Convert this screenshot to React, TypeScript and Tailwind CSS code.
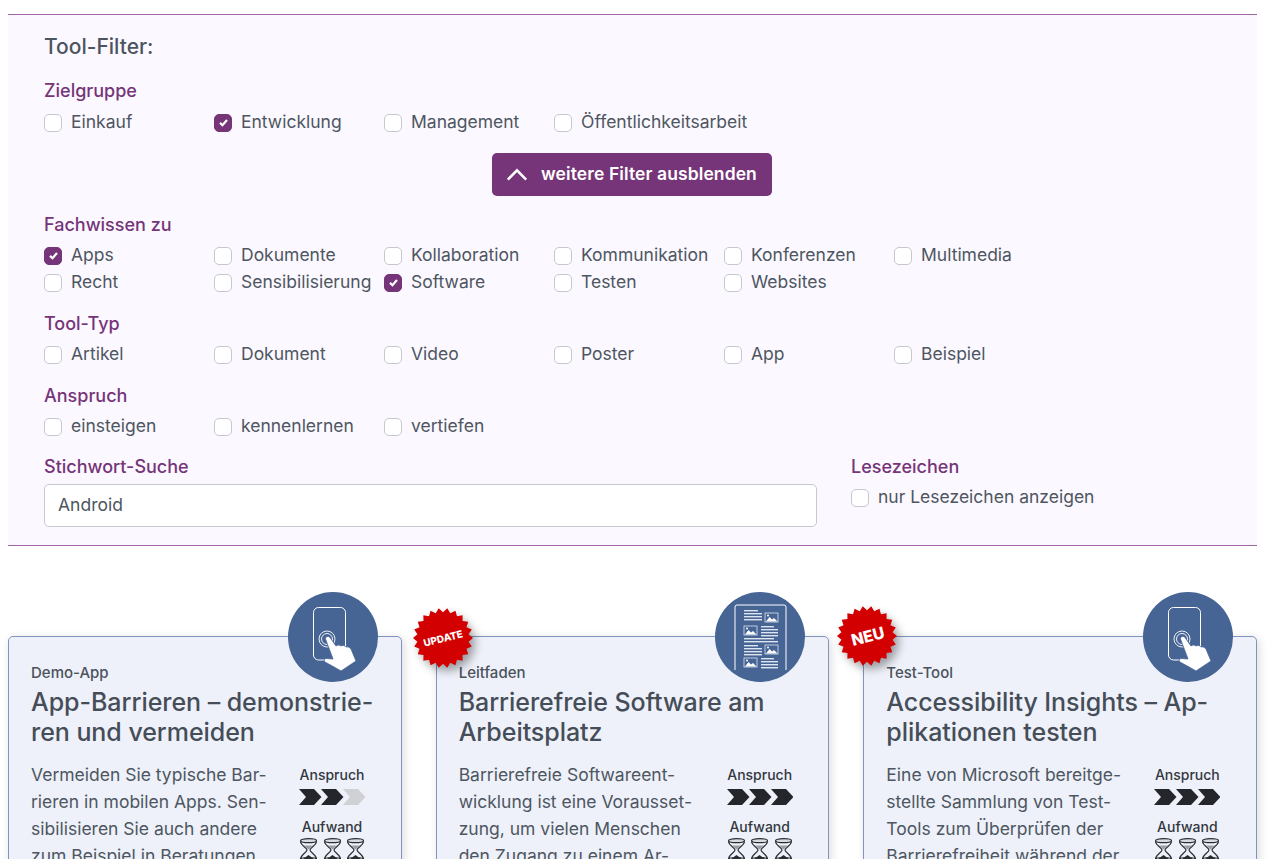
import React from "react";

const font = { fontFamily: '"Inter", "Liberation Sans", sans-serif' };

function Check({ label, checked = false, wide = false }: { label: string; checked?: boolean; wide?: boolean }) {
  return (
    <label className={`flex items-center gap-[9px] h-[27px] ${wide ? "" : "w-[170px]"}`}>
      <span
        className={`w-[18px] h-[18px] shrink-0 rounded-[5px] border flex items-center justify-center ${
          checked ? "bg-[#753578] border-[#753578]" : "bg-white border-[#c5c9cf]"
        }`}
      >
        {checked && (
          <svg viewBox="0 0 12 12" className="w-[11px] h-[11px]">
            <path d="M2.200 6.400 4.900 9 9.800 3.300" fill="none" stroke="#fff" strokeWidth="2.400" />
          </svg>
        )}
      </span>
      <span className="text-[17.5px] tracking-[0px] text-[#4d5661] whitespace-nowrap">{label}</span>
    </label>
  );
}

function Group({ title, children }: { title: string; children: React.ReactNode }) {
  return (
    <div>
      <div className="text-[18px] leading-[24px] font-medium text-[#753578] mb-[5px]">{title}</div>
      {children}
    </div>
  );
}

function Row({ items, checked = [] }: { items: string[]; checked?: string[] }) {
  return (
    <div className="flex">
      {items.map((i) => (
        <Check key={i} label={i} checked={checked.includes(i)} />
      ))}
    </div>
  );
}

function Burst({ text, size }: { text: string; size: string }) {
  const pts: string[] = [];
  const n = 22;
  for (let k = 0; k < n * 2; k++) {
    const r = k % 2 === 0 ? 50 : 43;
    const a = (Math.PI * k) / n;
    pts.push(`${50 + r * Math.cos(a)},${50 + r * Math.sin(a)}`);
  }
  return (
    <div className="relative w-[60px] h-[60px] flex items-center justify-center">
      <svg viewBox="0 0 100 100" className="absolute inset-0 w-full h-full drop-shadow-[4px_5px_4px_rgba(0,0,0,0.35)]">
        <polygon points={pts.join(" ")} fill="#d20000" />
      </svg>
      <span className={`relative text-white font-extrabold -rotate-[14deg] ${size}`}>{text}</span>
    </div>
  );
}

function PhoneIcon() {
  return (
    <svg viewBox="0 0 90 90" className="w-full h-full">
      <rect x="25.500" y="15.500" width="32" height="52.500" rx="5" fill="none" stroke="#fff" strokeWidth="1" />
      <circle cx="39" cy="47" r="8" fill="none" stroke="#fff" strokeWidth="0.9" />
      <circle cx="39" cy="47" r="5.500" fill="none" stroke="#fff" strokeWidth="0.9" />
      <path
        d="M37.500 47C37 44.500 40.500 43.500 42 45.500L48 54C50 52.500 52 53 53 54C55 53 57 53.500 58 55C60 54.500 62 55.500 63 57L68 69L53 79L47 75.500L37 70C35.500 69 36 66.500 38 66.500L45 67Z"
        fill="#fff"
        stroke="#466494"
        strokeWidth="0.8"
      />
    </svg>
  );
}

function DocIcon() {
  const lines = (x: number, y: number, w: number, n: number) =>
    Array.from({ length: n }, (_, i) => <rect key={`${x}-${y}-${i}`} x={x} y={y + i * 3} width={i === 0 && w > 16 ? w - 4 : w} height="1.400" fill="#dfe5f0" />);
  const pic = (x: number, y: number) => (
    <g key={`${x}-${y}`}>
      <rect x={x} y={y} width="13" height="9" fill="none" stroke="#dfe5f0" strokeWidth="0.8" />
      <path d={`M${x + 1} ${y + 8.5}l3.500-4.500 2.500 2.500 2-1.500 3.500 3.500z`} fill="#fff" />
      <circle cx={x + 3} cy={y + 2.5} r="1" fill="#fff" />
    </g>
  );
  return (
    <svg viewBox="0 0 90 90" className="w-full h-full">
      <path d="M20 78V15a2 2 0 0 1 2-2h47a2 2 0 0 1 2 2v63" fill="none" stroke="#fff" strokeWidth="1" />
      {lines(29, 18, 18, 4)}
      {pic(50, 21)}
      {pic(29, 34)}
      {lines(46, 34, 17, 4)}
      {lines(29, 46, 34, 2)}
      {lines(29, 53, 18, 4)}
      {pic(50, 53)}
      {pic(29, 66)}
      {lines(46, 66, 17, 4)}
    </svg>
  );
}

function Chevrons({ filled }: { filled: number }) {
  return (
    <svg viewBox="0 0 66 16" className="w-[66px] h-[16px]">
      {[0, 1, 2].map((i) => (
        <polygon
          key={i}
          points={`${i * 22},0 ${i * 22 + 15},0 ${i * 22 + 22.5},8 ${i * 22 + 15},16 ${i * 22},16 ${i * 22 + 7},8`}
          fill={i < filled ? "#24262b" : "#cfd1d4"}
        />
      ))}
    </svg>
  );
}

function Hourglass() {
  return (
    <svg viewBox="0 0 19 24" className="w-[19px] h-[24px] shrink-0">
      <ellipse cx="9.500" cy="2.700" rx="8" ry="2" fill="#d8dbe0" stroke="#2a2c30" strokeWidth="1.200" />
      <ellipse cx="9.500" cy="21.500" rx="8" ry="2" fill="#d8dbe0" stroke="#2a2c30" strokeWidth="1.200" />
      <path d="M1.500 3.500C2 8 8 9.500 8 12S2 16 1.500 21M17.500 3.500C17 8 11 9.500 11 12S17 16 17.500 21" fill="none" stroke="#2a2c30" strokeWidth="1.200" />
      <path d="M5 7.500h9L9.500 11.500z" fill="#9a9da3" />
      <path d="M4 21 9.500 17 15 21z" fill="#2a2c30" />
    </svg>
  );
}

function Card({
  kind,
  title,
  text,
  filled,
  icon,
  badge,
}: {
  kind: string;
  title: React.ReactNode;
  text: React.ReactNode;
  filled: number;
  icon: React.ReactNode;
  badge?: React.ReactNode;
}) {
  return (
    <div className="relative h-[260px] bg-[#eef1f9] border-[1.5px] border-[#7f95bf] rounded-t-[5px] pl-[22px] pt-[26px] shadow-[2px_2px_10px_rgba(0,0,0,0.14)]">
      <div className="absolute -top-[45px] right-[23px] w-[90px] h-[90px] rounded-full bg-[#466494]">{icon}</div>
      {badge}
      <div className="text-[15px] leading-[20px] font-medium text-[#4b525c]">{kind}</div>
      <div className="text-[25px] leading-[30px] font-medium tracking-[-0.05px] text-[#454d58] mt-[4px] whitespace-nowrap">{title}</div>
      <div className="flex mt-[14px]">
        <div className="w-[250px] text-[17.5px] leading-[27px] text-[#4d5661] whitespace-nowrap">{text}</div>
        <div className="w-[90px] flex flex-col items-center ml-[6px] pt-[4px]">
          <div className="text-[14px] leading-[20px] font-medium text-[#33383f]">Anspruch</div>
          <div className="mt-[4px] h-[16px]">
            <Chevrons filled={filled} />
          </div>
          <div className="text-[14px] leading-[20px] font-medium text-[#33383f] mt-[12px]">Aufwand</div>
          <div className="flex gap-[4.500px] mt-[1px]">
            <Hourglass />
            <Hourglass />
            <Hourglass />
          </div>
        </div>
      </div>
    </div>
  );
}

export default function App() {
  return (
    <div className="h-[864px] bg-white">
      <div className="h-[859px] overflow-hidden px-2 pt-[14px]" style={font}>
        <div className="w-[1249px] h-[532px] bg-[#fcf8ff] border-y border-[#a065a3] pl-9 pt-[17px]">
          <h2 className="text-[21px] leading-[30px] font-medium text-[#4c545f]">Tool-Filter:</h2>
          <div className="mt-[17px]">
            <Group title="Zielgruppe">
              <div className="pt-[1px]">
                <Row items={["Einkauf", "Entwicklung", "Management", "Öffentlichkeitsarbeit"]} checked={["Entwicklung"]} />
              </div>
            </Group>
          </div>
          <div className="flex justify-center pr-[38px] mt-[17px]">
            <button className="h-[43px] w-[280px] rounded-[5px] bg-[#753578] text-white flex items-center justify-center gap-[13px] text-[17.5px] font-semibold tracking-[0.1px]">
              <svg viewBox="0 0 24 14" className="w-[22px] h-[13px]">
                <path d="M2 12.500 12 2.500l10 10" fill="none" stroke="#fff" strokeWidth="2.800" />
              </svg>
              weitere Filter ausblenden
            </button>
          </div>
          <div className="mt-[17px]">
            <Group title="Fachwissen zu">
              <Row items={["Apps", "Dokumente", "Kollaboration", "Kommunikation", "Konferenzen", "Multimedia"]} checked={["Apps"]} />
              <Row items={["Recht", "Sensibilisierung", "Software", "Testen", "Websites"]} checked={["Software"]} />
            </Group>
          </div>
          <div className="mt-[16px]">
            <Group title="Tool-Typ">
              <Row items={["Artikel", "Dokument", "Video", "Poster", "App", "Beispiel"]} />
            </Group>
          </div>
          <div className="mt-[16px]">
            <Group title="Anspruch">
              <Row items={["einsteigen", "kennenlernen", "vertiefen"]} />
            </Group>
          </div>
          <div className="flex mt-[15px]">
            <div className="w-[807px]">
              <div className="text-[18px] leading-[24px] font-medium text-[#753578] mb-[5px]">Stichwort-Suche</div>
              <div className="w-[773px] h-[43px] bg-white border border-[#c5c9cf] rounded-[5px] flex items-center pl-[13px] text-[17.5px] text-[#4d5661]">
                Android
              </div>
            </div>
            <div>
              <div className="text-[18px] leading-[24px] font-medium text-[#753578] mb-[5px]">Lesezeichen</div>
              <Check label="nur Lesezeichen anzeigen" wide />
            </div>
          </div>
        </div>

        <div className="grid grid-cols-3 gap-[34px] w-[1249px] mt-[90px]">
          <Card
            kind="Demo-App"
            title={<>App-Barrieren – demonstrie-<br />ren und vermeiden</>}
            text={<>Vermeiden Sie typische Bar-<br />rieren in mobilen Apps. Sen-<br />sibilisieren Sie auch andere<br />zum Beispiel in Beratungen</>}
            filled={2}
            icon={<PhoneIcon />}
          />
          <Card
            kind="Leitfaden"
            title={<>Barrierefreie Software am<br />Arbeitsplatz</>}
            text={<>Barrierefreie Softwareent-<br />wicklung ist eine Vorausset-<br />zung, um vielen Menschen<br />den Zugang zu einem Ar-</>}
            filled={3}
            icon={<DocIcon />}
            badge={<div className="absolute -top-[29px] -left-[24px]"><Burst text="UPDATE" size="text-[10px]" /></div>}
          />
          <Card
            kind="Test-Tool"
            title={<>Accessibility Insights – Ap-<br />plikationen testen</>}
            text={<>Eine von Microsoft bereitge-<br />stellte Sammlung von Test-<br />Tools zum Überprüfen der<br />Barrierefreiheit während der</>}
            filled={3}
            icon={<PhoneIcon />}
            badge={<div className="absolute -top-[31px] -left-[27px]"><Burst text="NEU" size="text-[16px]" /></div>}
          />
        </div>
      </div>
    </div>
  );
}
